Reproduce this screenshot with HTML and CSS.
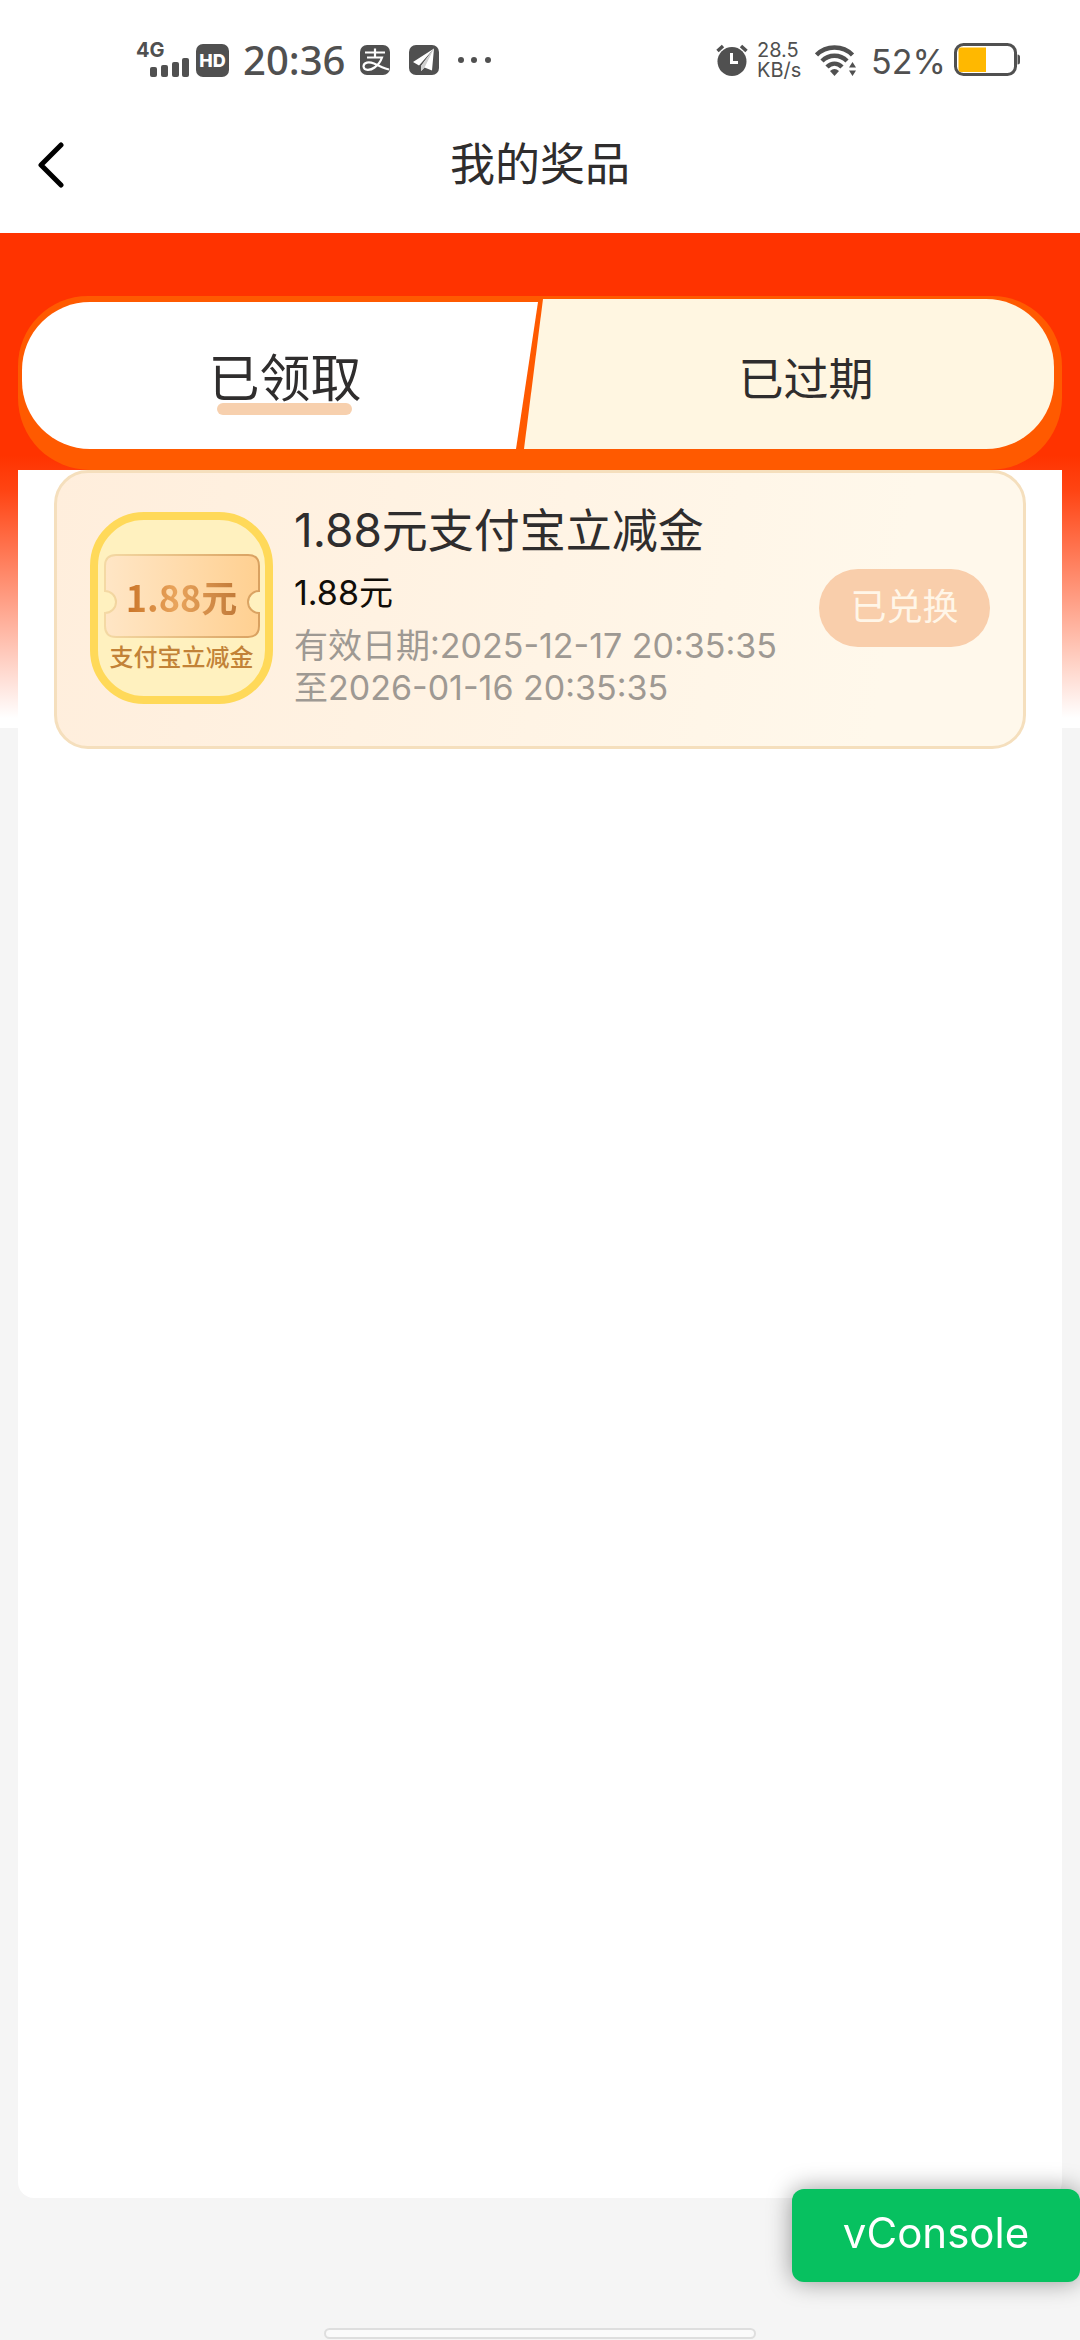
FILE: index.html
```html
<!DOCTYPE html>
<html lang="zh-CN">
<head>
<meta charset="utf-8">
<meta name="viewport" content="width=device-width, initial-scale=1">
<title>我的奖品</title>
<link rel="stylesheet" href="styles.css">
</head>
<body>
<div class="status">
  <div class="status-side">
    <div class="signal">
      <span class="signal-type">4G</span>
      <svg class="signal-bars" width="40" height="19" viewBox="0 0 40 19" aria-hidden="true"><g fill="#505050"><rect x="0" y="9" width="7" height="10" rx="2"/><rect x="11" y="7" width="7" height="12" rx="2"/><rect x="22" y="4" width="7" height="15" rx="2"/><rect x="32" y="0" width="7" height="19" rx="2"/></g></svg>
    </div>
    <span class="hd">HD</span>
    <span class="clock">20:36</span>
    <svg class="app-icon" width="30" height="30" viewBox="0 0 30 30" aria-hidden="true"><rect width="30" height="30" rx="7" fill="#505050"/><g fill="none" stroke="#fff" stroke-width="2.200"><path d="M5 7.500H25M15 3.500V12.500M7 12.500H22C20.500 17 18 20 14.500 22.500C10.500 25.500 4 26 3.500 21.500C3.500 17 9 16.500 14 18.500C19 20.500 24 23.500 29 24.500"/></g></svg>
    <svg class="app-icon" width="30" height="30" viewBox="0 0 30 30" aria-hidden="true"><rect width="30" height="30" rx="7" fill="#505050"/><path d="M25 3.500L4 17L10 20.500Z M25 3.500L12 21V26L15.500 22.500L23 25.500Z" fill="#fff"/><path d="M25 3.500L12 21V26L15.500 22.500Z" fill="#d0d0d0"/></svg>
    <svg class="more" width="34" height="6" viewBox="0 0 34 6" aria-hidden="true"><g fill="#505050"><circle cx="3" cy="3" r="3"/><circle cx="16" cy="3" r="3"/><circle cx="30" cy="3" r="3"/></g></svg>
  </div>
  <div class="status-side">
    <svg width="32" height="32" viewBox="0 0 32 32" aria-hidden="true"><circle cx="16" cy="17.500" r="14.500" fill="#505050"/><path d="M1.500 7L7 2M30.500 7L25 2" stroke="#505050" stroke-width="3.500"/><path d="M15.500 9V18.500H22" fill="none" stroke="#fff" stroke-width="3"/></svg>
    <span class="speed"><span>28.5</span><span>KB/s</span></span>
    <svg class="wifi" width="42" height="31" viewBox="0 0 42 31" aria-hidden="true"><g fill="none" stroke="#505050" stroke-width="4.500"><path d="M1.500 10C11 0 28 0 37.500 10"/><path d="M7 16C14 9 25 9 32 16"/><path d="M12 22C16.500 17.500 22.500 17.500 27 22"/></g><path d="M15 26Q19.500 22 24 26L19.500 31Z" fill="#505050"/><path d="M37.500 17L41 22.500H34Z M37.500 31L34 25.500H41Z" fill="#505050"/></svg>
    <span class="percent">52%</span>
    <svg class="battery" width="66" height="34" viewBox="0 0 66 34" aria-hidden="true"><rect x="1.500" y="1.500" width="60" height="30" rx="8" fill="#fff" stroke="#505050" stroke-width="3"/><path d="M7 4.500H32V29H7Q4.500 29 4.500 26V7Q4.500 4.500 7 4.500Z" fill="#ffb800"/><path d="M63.500 11.500Q66 11.500 66 14V19Q66 21.500 63.500 21.500Z" fill="#505050"/></svg>
  </div>
</div>

<header class="nav">
  <button class="back" type="button" aria-label="返回"><svg width="26" height="46" viewBox="0 0 26 46" aria-hidden="true"><path d="M23 3L3 23L23 43" fill="none" stroke="#000" stroke-width="5" stroke-linecap="round" stroke-linejoin="round"/></svg></button>
  <h1 class="nav-title">我的奖品</h1>
</header>

<main class="page">
  <div class="tabs" role="tablist">
    <button class="tab tab-active" type="button" role="tab" aria-selected="true"><span class="tab-label">已领取</span></button>
    <button class="tab tab-idle" type="button" role="tab" aria-selected="false">已过期</button>
  </div>
  <section class="panel">
    <article class="card">
      <div class="thumb">
        <div class="ticket">
          <svg class="ticket-shape" width="156" height="84" viewBox="0 0 156 84" aria-hidden="true">
            <defs><linearGradient id="tk" x1="0" x2="1"><stop offset="0" stop-color="#ffe6c6"/><stop offset="1" stop-color="#ffd091"/></linearGradient><linearGradient id="te" x1="0" x2="1"><stop offset="0" stop-color="#f4d9a4"/><stop offset="1" stop-color="#d9a160"/></linearGradient></defs>
            <path d="M12 1H144Q155 1 155 12V37A11 11 0 0 0 155 59V72Q155 83 144 83H12Q1 83 1 72V59A11 11 0 0 0 1 37V12Q1 1 12 1Z" fill="url(#tk)" stroke="url(#te)" stroke-width="2"/>
          </svg>
          <span class="ticket-value">1.88元</span>
        </div>
        <span class="thumb-caption">支付宝立减金</span>
      </div>
      <div class="info">
        <h2 class="info-title">1.88元支付宝立减金</h2>
        <p class="info-amount">1.88元</p>
        <p class="info-date">有效日期:2025-12-17 20:35:35<br>至2026-01-16 20:35:35</p>
      </div>
      <button class="redeem" type="button">已兑换</button>
    </article>
  </section>
</main>

<button class="vconsole" type="button">vConsole</button>
<div class="home-bar"></div>
</body>
</html>
```
FILE: styles.css
```css
* { box-sizing: border-box; }

body {
  margin: 0;
  min-height: 100vh;
  display: flex;
  flex-direction: column;
  background: #f5f5f5;
  color: #2f2d2d;
  font-family: Inter, "Noto Sans CJK SC", sans-serif;
}

button {
  margin: 0;
  padding: 0;
  border: 0;
  background: none;
  color: inherit;
  font: inherit;
}

h1, h2, p { margin: 0; font-weight: 400; }
svg { display: block; flex: none; }

/* Status bar */
.status {
  display: flex;
  justify-content: space-between;
  height: 120px;
  padding: 0 60px 0 136px;
  background: #fff;
  color: #505050;
}
.status-side { display: flex; align-items: center; height: 120px; }
.signal { width: 54px; height: 36px; }
.signal-type { display: block; font-size: 20px; line-height: 16px; font-weight: 700; }
.signal-bars { margin-left: 14px; }
.hd {
  width: 33px;
  margin: 0 14px 0 6px;
  border-radius: 7px;
  background: #505050;
  color: #fff;
  font-size: 18px;
  line-height: 33px;
  font-weight: 800;
  text-align: center;
}
.clock {
  width: 117px;
  font-family: "Noto Sans", sans-serif;
  font-size: 40px;
  line-height: 48px;
  font-weight: 500;
}
.app-icon { margin-right: 19px; }
.speed {
  display: flex;
  flex-direction: column;
  width: 58px;
  padding-left: 9px;
  font-size: 20px;
  line-height: 20px;
}
.wifi { margin: 0 14px 0 9px; }
.percent { width: 83px; font-size: 34px; line-height: 40px; padding-top: 4px; }

/* Title bar */
.nav {
  display: grid;
  grid-template-columns: 100px 1fr 100px;
  align-items: center;
  height: 113px;
  padding-bottom: 24px;
  background: #fff;
}
.back { padding-left: 38px; }
.nav-title { font-size: 45px; line-height: 64px; text-align: center; }

/* Content */
.page {
  flex: 1;
  display: flex;
  flex-direction: column;
  padding: 63px 18px 142px;
  background: linear-gradient(#ff3300 0, #ff3300 45%, #ff4413 52%, #fff 98%) 0 0 / 100% 495px no-repeat;
}
.tabs {
  display: flex;
  height: 174px;
  padding: 3px 8px 21px 4px;
  border-radius: 70px 70px 72px 72px;
  background: #ff5a00;
}
.tab { display: flex; align-items: center; justify-content: center; color: #2f2d2d; }
.tab-active {
  flex: 0 0 50%;
  margin-top: 3px;
  padding-left: 10px;
  border-radius: 68px 0 0 68px;
  background: #fff;
  clip-path: polygon(0 0, 100% 0, calc(100% - 22px) 100%, 0 100%);
  font-size: 51px;
}
.tab-label {
  display: flex;
  flex-direction: column;
  align-items: center;
  padding-top: 12px;
  line-height: 60px;
}
.tab-label::after {
  content: "";
  width: 135px;
  height: 12px;
  margin-top: -6px;
  border-radius: 6px;
  background: #f7d0ae;
}
.tab-idle {
  flex: 1;
  margin-left: -14px;
  padding: 4px 0 0 34px;
  border-radius: 0 68px 68px 0;
  background: #fff6e1;
  clip-path: polygon(19px 0, 100% 0, 100% 100%, 0 100%);
  font-size: 45px;
}
.panel {
  flex: 1;
  padding: 0 36px;
  border-radius: 0 0 16px 16px;
  background: #fff;
}

/* Prize card */
.card {
  display: flex;
  align-items: center;
  height: 279px;
  padding: 0 33px 4px;
  border: 3px solid #f5dfbd;
  border-radius: 34px;
  background: linear-gradient(100deg, #ffeedc, #fff8eb 85%);
}
.thumb {
  display: flex;
  flex-direction: column;
  align-items: center;
  width: 183px;
  height: 192px;
  padding-top: 34px;
  border: 8px solid #ffd959;
  border-radius: 54px;
  background: #fff1bf;
}
.ticket { display: grid; place-items: center; }
.ticket > * { grid-area: 1 / 1; }
.ticket-value {
  background: linear-gradient(90deg, #c97427, #e9a45c 45%, #c17a39);
  background-clip: text;
  color: transparent;
  font-family: "Noto Sans CJK SC", sans-serif;
  font-size: 36px;
  line-height: 40px;
  font-weight: 700;
}
.thumb-caption {
  color: #c28237;
  font-size: 24px;
  line-height: 40px;
  font-weight: 500;
  white-space: nowrap;
}
.info { flex: 1; padding: 0 0 8px 21px; }
.info-title { font-size: 46px; line-height: 62px; }
.info-amount { color: #110d08; font-size: 34px; line-height: 64px; }
.info-date { color: #9e9993; font-size: 34px; line-height: 42px; }
.redeem {
  width: 171px;
  height: 78px;
  padding-bottom: 8px;
  border-radius: 39px;
  background: #f9ceab;
  color: #fff6e8;
  font-size: 36px;
}

/* Overlays */
.vconsole {
  position: fixed;
  right: 0;
  bottom: 58px;
  width: 288px;
  height: 93px;
  padding-bottom: 6px;
  border-radius: 12px;
  background: #07c160;
  box-shadow: 0 0 24px rgba(0, 0, 0, .4);
  color: #fff;
  font-size: 42px;
}
.home-bar {
  position: fixed;
  bottom: 1px;
  left: 30%;
  right: 30%;
  height: 11px;
  border: 2px solid #dedede;
  border-radius: 6px;
  background: #fafafa;
}
```
